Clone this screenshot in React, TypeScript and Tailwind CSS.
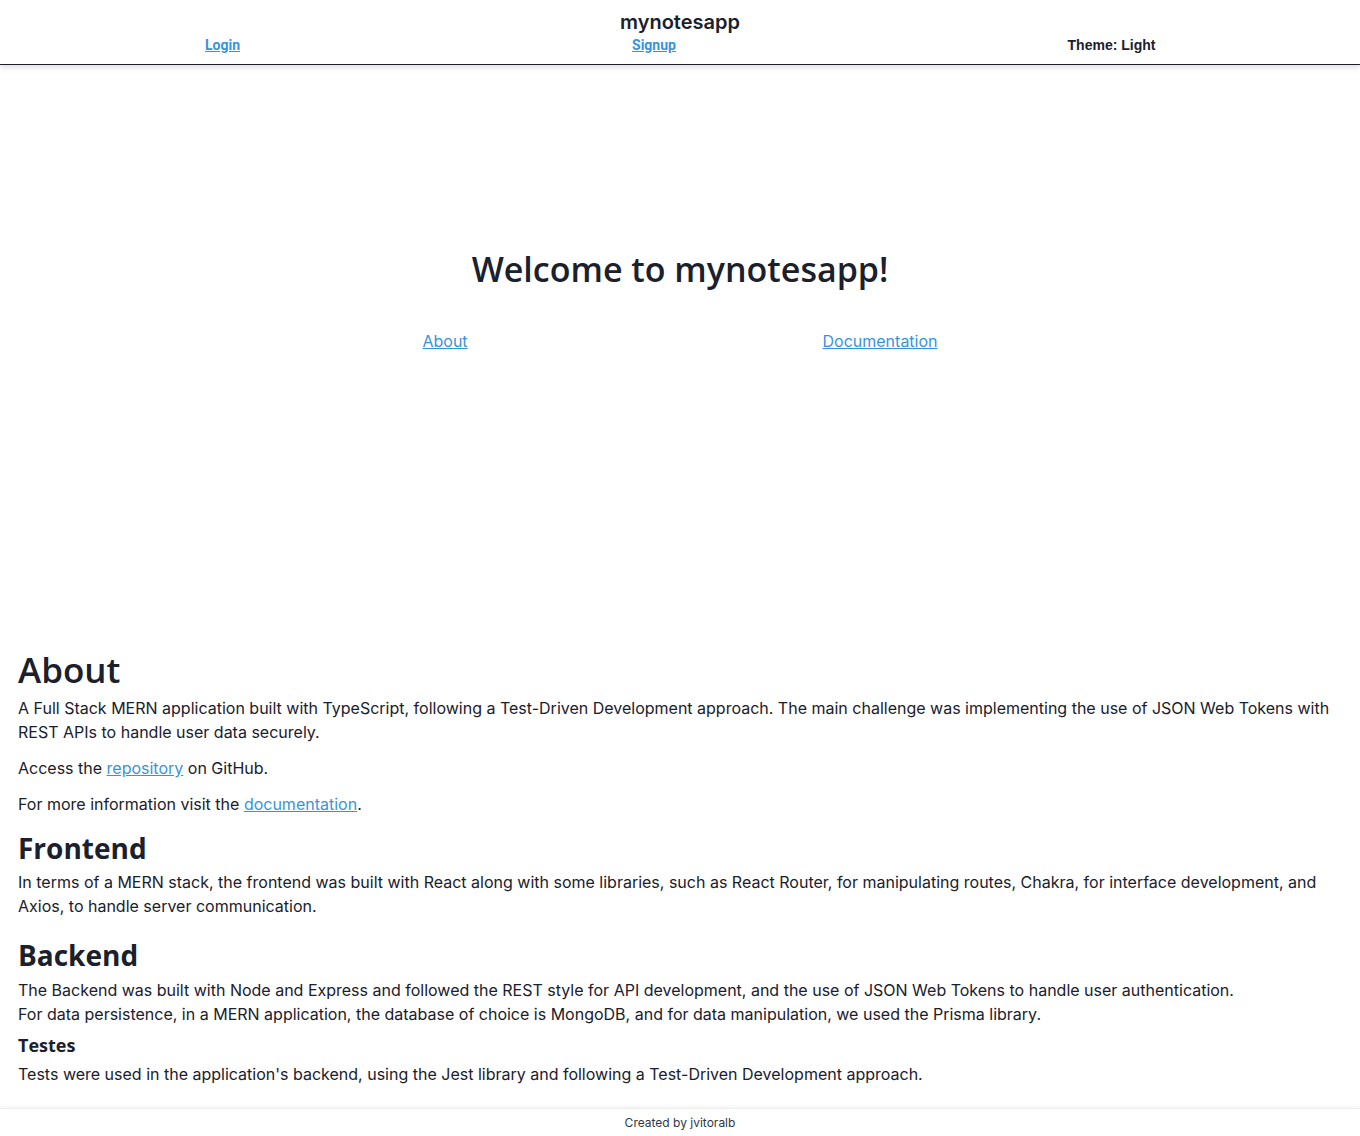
import * as React from "react";

const HEADING_FONT = "font-['Open_Sans',sans-serif]";

function Header() {
  return (
    <header className="border-b border-[#1a202c] shadow-[0_2px_6px_rgba(0,0,0,0.15)] pb-[10px]">
      <h1 className="pt-[8px] text-center text-[20px] leading-[28px] font-semibold text-[#1a202c]">
        mynotesapp
      </h1>
      <nav className="grid grid-cols-[445px_418px_1fr] text-[14px] leading-[18px] font-bold text-center">
        <div>
          <a href="#" className="font-['Roboto',sans-serif] text-[#3794dc] underline">Login</a>
        </div>
        <div>
          <a href="#" className="font-['Roboto',sans-serif] text-[#3794dc] underline">Signup</a>
        </div>
        <div>
          <button className="font-['Liberation_Sans',sans-serif] text-[#1a202c]">Theme: Light</button>
        </div>
      </nav>
    </header>
  );
}

function Hero() {
  return (
    <section className="h-[575px] pt-[183px]">
      <h2 className={`${HEADING_FONT} text-center text-[34px] leading-[43px] font-semibold text-[#1a202c]`}>
        Welcome to mynotesapp!
      </h2>
      <div className="mx-auto mt-[38px] flex w-[870px] justify-around leading-6">
        <a href="#" className="text-[#3794dc] underline">About</a>
        <a href="#" className="text-[#3794dc] underline">Documentation</a>
      </div>
    </section>
  );
}

function About() {
  return (
    <section className="px-[18px] pt-[8px] text-[#1a202c] leading-6">
      <h2 className={`${HEADING_FONT} text-[35px] leading-[43px] font-semibold`}>About</h2>
      <p className="mt-[5px]">
        A Full Stack MERN application built with TypeScript, following a Test-Driven Development approach. The main challenge was implementing the use of JSON Web Tokens with REST APIs to handle user data securely.
      </p>
      <p className="mt-[12px]">
        Access the <a href="#" className="text-[#3794dc] underline">repository</a> on GitHub.
      </p>
      <p className="mt-[12px]">
        For more information visit the <a href="#" className="text-[#3794dc] underline">documentation</a>.
      </p>

      <h3 className={`${HEADING_FONT} mt-[14px] text-[28px] leading-[36px] font-bold`}>Frontend</h3>
      <p className="mt-[4px]">
        In terms of a MERN stack, the frontend was built with React along with some libraries, such as React Router, for manipulating routes, Chakra, for interface development, and Axios, to handle server communication.
      </p>

      <h3 className={`${HEADING_FONT} mt-[19px] text-[28px] leading-[36px] font-bold`}>Backend</h3>
      <p className="mt-[5px]">
        The Backend was built with Node and Express and followed the REST style for API development, and the use of JSON Web Tokens to handle user authentication.
        <br />
        For data persistence, in a MERN application, the database of choice is MongoDB, and for data manipulation, we used the Prisma library.
      </p>
      <h4 className={`${HEADING_FONT} mt-[7px] text-[18px] leading-[24px] font-bold`}>Testes</h4>
      <p className="mt-[5px]">
        Tests were used in the application's backend, using the Jest library and following a Test-Driven Development approach.
      </p>
    </section>
  );
}

export default function App() {
  return (
    <div className="min-h-screen bg-white font-['Inter',sans-serif] text-[#1a202c]">
      <Header />
      <Hero />
      <About />
      <footer className="mt-[22px] h-[28px] border-t border-[#ececec] shadow-[0_-2px_4px_rgba(0,0,0,0.04)] flex items-center justify-center">
        <span className="text-[12px] text-[#2d3748]">Created by jvitoralb</span>
      </footer>
    </div>
  );
}
